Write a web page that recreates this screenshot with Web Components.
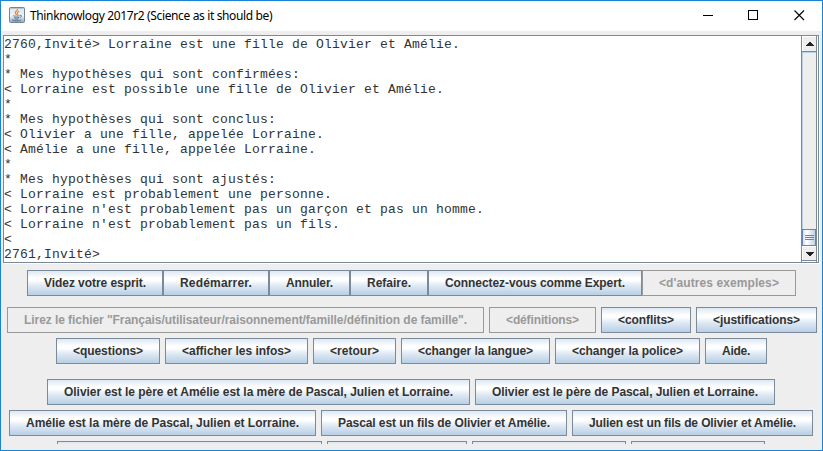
<!DOCTYPE html>
<html lang="fr">
<head>
<meta charset="utf-8">
<title>Thinknowlogy 2017r2</title>
<style>
html,body{margin:0;height:100%;overflow:hidden;background:#eee}
</style>
</head>
<body>
<app-window></app-window>
<script>
const define = (name, html, ready) => customElements.define(name, class extends HTMLElement {
  connectedCallback() {
    if (this.shadowRoot) return;
    this.attachShadow({mode: 'open'}).innerHTML = html;
    if (ready) ready(this, this.shadowRoot);
  }
});

define('title-bar', `<style>
:host{display:flex;height:30px;flex:none;background:#fff;align-items:flex-start;font:12px "Noto Sans","Open Sans",sans-serif;color:#000}
.logo{width:16px;height:16px;margin:6px 5px 0 8px;flex:none}
.t{flex:1;white-space:pre;line-height:30px;letter-spacing:-.36px}
.b{width:46px;height:30px;flex:none}
.b:last-child{margin-right:-1px}
</style>
<svg class="logo" viewBox="0 0 16 16"><defs><linearGradient id="g" x2="0" y2="1"><stop stop-color="#8495a5"/><stop offset=".12" stop-color="#e3e8ec"/><stop offset=".55" stop-color="#f0f2f4"/><stop offset="1" stop-color="#93a5b5"/></linearGradient></defs>
<rect x=".5" y=".5" width="15" height="15" rx="1" fill="url(#g)" stroke="#70869a"/>
<path d="M8.600 1.800C9.300 3.600 5.700 4.400 6.300 6c.2.8 1.100 1.200 1.100 2M10.200 4.200C8.400 4.900 7.900 5.700 8.600 6.600c.5.7.1 1.200-.4 1.600" fill="none" stroke="#e8822b" stroke-width="1.100"/>
<path d="M4.500 8.400c-1.500.9 5 .9 6.300.3M5.200 10.300c1 .7 3.700.6 4.900.1M5.600 11.900c1 .5 2.900.5 3.900 0M4.300 12.300c-2.200.9 0 1.500 3.300 1.500s4.900-.6 4.200-1.200M11 8.300c2.100-.4 1.900 1.700-.2 2.400" fill="none" stroke="#456b91" stroke-width=".9"/></svg>
<span class="t"><slot></slot></span>
<svg class="b" viewBox="0 0 46 30"><path d="M18 14.500h10" stroke="#000"/></svg>
<svg class="b" viewBox="0 0 46 30"><rect x="17.500" y="9.500" width="9" height="9" fill="none" stroke="#000"/></svg>
<svg class="b" viewBox="0 0 46 30"><path d="M17.500 9.500l9.500 9.500M27 9.500l-9.500 9.500" fill="none" stroke="#000" stroke-width="1.100"/></svg>`);

define('scroll-bar', `<style>
:host{display:flex;flex-direction:column;width:16px;border-left:1px solid #7a8a99;border-right:1px solid #7a8a99;box-sizing:border-box;flex:none;background:#eee}
svg{display:block;width:14px;flex:none}
.track{flex:1;box-shadow:inset 1px 1px #b8cfe5}
</style>
<svg style="height:16px" viewBox="0 0 14 16" shape-rendering="crispEdges"><path d="M0 0h14v16H0z" fill="#eee"/><path d="M0 .5h14M.5 0v15" stroke="#fff"/><path d="M0 15.500h14" stroke="#7a8a99"/><path d="M7 6h2v1h1v1h1v1h1v1H4V9h1V8h1V7h1z" fill="#222"/></svg>
<div class="track"></div>
<svg style="height:17px" viewBox="0 0 14 17" shape-rendering="crispEdges"><defs><linearGradient id="g"><stop stop-color="#c8daec"/><stop offset=".35" stop-color="#fff"/><stop offset="1" stop-color="#b8cfe5"/></linearGradient></defs><rect width="14" height="17" fill="url(#g)"/><path d="M0 .5h14M0 16.500h14M.5 0v17M13.500 0v17M3 6.500h9M3 8.500h9M3 10.500h9" stroke="#6382bf"/></svg>
<svg style="height:16px" viewBox="0 0 14 16" shape-rendering="crispEdges"><path d="M0 0h14v16H0z" fill="#eee"/><path d="M0 .5h14M.5 0v14M0 15.500h14" stroke="#fff"/><path d="M0 14.500h14" stroke="#7a8a99"/><path d="M4 6h8v1h-1v1h-1v1H9v1H7V9H6V8H5V7H4z" fill="#222"/></svg>`);

define('text-console', `<style>
:host{display:flex;box-sizing:border-box;height:228px;width:816px;margin:4px 0 0 2px;flex:none;border:1px solid #7a8a99;background:#fff;box-shadow:1px 1px #fff}
pre{margin:0;flex:1;padding-top:1px;font:13px/15px "Liberation Mono","Courier New",monospace;letter-spacing:.2px;color:#333;overflow:hidden}
scroll-bar{margin-right:1px}
</style><pre></pre><scroll-bar></scroll-bar>`, (el, root) => {
  root.querySelector('pre').textContent = el.textContent.trim();
});

define('push-button', `<style>
:host{display:flex;box-sizing:border-box;height:26px;flex:none;align-items:center;justify-content:center;border:1px solid #7a8a99;
background:linear-gradient(#dde8f3 0,#fff 30%,#fff 38%,#dde8f3 62%,#b8cfe5 100%);font:bold 12px "Liberation Sans",Arial,sans-serif;color:#333;white-space:nowrap}
:host([disabled]){background:#eee;color:#999;border-color:#999}
span{line-height:24px}
</style><span><slot></slot></span>`, (el, root) => {
  const w = +el.getAttribute('w');
  el.style.width = w + 'px';
  const s = root.querySelector('span'), n = el.textContent.length;
  if (!n) return;
  // Spread the label so that it fills the space between 17px side insets.
  const gap = (w - 34 - s.getBoundingClientRect().width) / n;
  s.style.letterSpacing = gap.toFixed(3) + 'px';
});

define('button-row', `<style>
:host{display:flex;flex:none;height:26px;gap:5px;box-sizing:border-box}
:host([joined]){gap:0}
</style><slot></slot>`, el => {
  el.style.paddingLeft = (el.getAttribute('inset') - 1) + 'px';
});

define('button-panel', `<style>
:host{display:flex;flex-direction:column;gap:5px;height:var(--h);overflow:hidden;flex:none;margin-top:var(--gap)}
</style><slot></slot>`);

define('app-window', `<style>
:host{display:flex;flex-direction:column;box-sizing:border-box;width:823px;height:451px;border:1px solid #1883d7;background:#eee;overflow:hidden}
</style>
<title-bar>Thinknowlogy 2017r2 (Science as it should be)</title-bar>
<text-console>
2760,Invité&gt; Lorraine est une fille de Olivier et Amélie.
*
* Mes hypothèses qui sont confirmées:
&lt; Lorraine est possible une fille de Olivier et Amélie.
*
* Mes hypothèses qui sont conclus:
&lt; Olivier a une fille, appelée Lorraine.
&lt; Amélie a une fille, appelée Lorraine.
*
* Mes hypothèses qui sont ajustés:
&lt; Lorraine est probablement une personne.
&lt; Lorraine n'est probablement pas un garçon et pas un homme.
&lt; Lorraine n'est probablement pas un fils.
&lt;
2761,Invité&gt;
</text-console>
<button-panel style="--h:26px;--gap:7px">
<button-row inset="27" joined><push-button w="136">Videz votre esprit.</push-button><push-button w="106">Redémarrer.</push-button><push-button w="81">Annuler.</push-button><push-button w="78">Refaire.</push-button><push-button w="214">Connectez-vous comme Expert.</push-button><push-button w="154" disabled>&lt;d'autres exemples&gt;</push-button></button-row>
</button-panel>
<button-panel style="--h:57px;--gap:11px">
<button-row inset="7"><push-button w="477" disabled>Lirez le fichier "Français/utilisateur/raisonnement/famille/définition de famille".</push-button><push-button w="107" disabled>&lt;définitions&gt;</push-button><push-button w="90">&lt;conflits&gt;</push-button><push-button w="121">&lt;justifications&gt;</push-button></button-row>
<button-row inset="56"><push-button w="104">&lt;questions&gt;</push-button><push-button w="143">&lt;afficher les infos&gt;</push-button><push-button w="83">&lt;retour&gt;</push-button><push-button w="149">&lt;changer la langue&gt;</push-button><push-button w="145">&lt;changer la police&gt;</push-button><push-button w="62">Aide.</push-button></button-row>
</button-panel>
<button-panel style="--h:65px;--gap:15px">
<button-row inset="47"><push-button w="423">Olivier est le père et Amélie est la mère de Pascal, Julien et Lorraine.</push-button><push-button w="300">Olivier est le père de Pascal, Julien et Lorraine.</push-button></button-row>
<button-row inset="9"><push-button w="307">Amélie est la mère de Pascal, Julien et Lorraine.</push-button><push-button w="246">Pascal est un fils de Olivier et Amélie.</push-button><push-button w="241">Julien est un fils de Olivier et Amélie.</push-button></button-row>
<button-row inset="57"><push-button w="265"></push-button><push-button w="140"></push-button><push-button w="154"></push-button><push-button w="134"></push-button></button-row>
</button-panel>`);
</script>
</body>
</html>
